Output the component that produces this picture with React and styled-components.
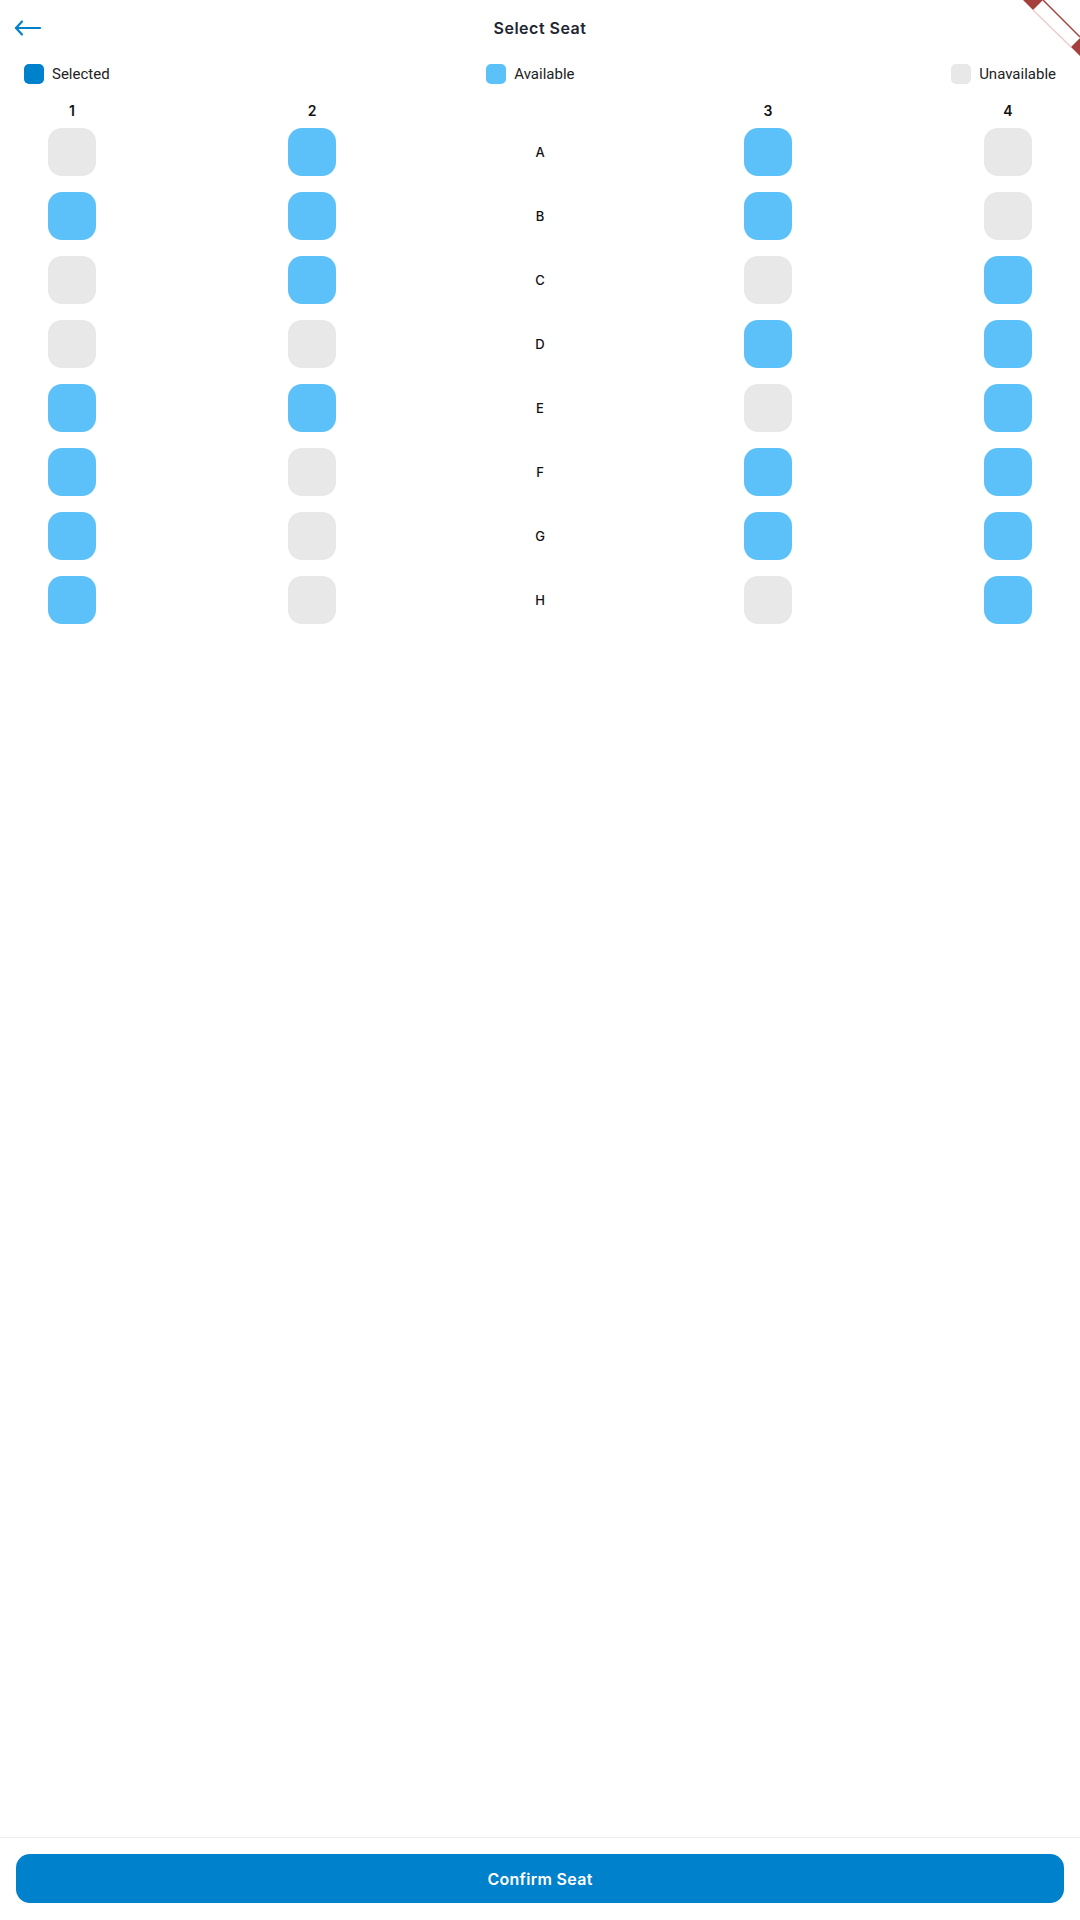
import React from 'react';
import styled, {createGlobalStyle} from 'styled-components';

const GlobalStyle = createGlobalStyle`
    html, body {
        margin: 0;
        padding: 0;
        background: #ffffff;
    }
    body {
        font-family: Inter, "Noto Sans", sans-serif;
        color: #111;
    }
`;

const COLORS = {
    selected: '#0081CC',
    available: '#5CC1F8',
    unavailable: '#E8E8E8',
};

// a = available, u = unavailable
const rows = [
    {label: 'A', seats: ['u', 'a', 'a', 'u']},
    {label: 'B', seats: ['a', 'a', 'a', 'u']},
    {label: 'C', seats: ['u', 'a', 'u', 'a']},
    {label: 'D', seats: ['u', 'u', 'a', 'a']},
    {label: 'E', seats: ['a', 'a', 'u', 'a']},
    {label: 'F', seats: ['a', 'u', 'a', 'a']},
    {label: 'G', seats: ['a', 'u', 'a', 'a']},
    {label: 'H', seats: ['a', 'u', 'u', 'a']},
];

const BackArrow = () => (
    <svg width="28" height="28" viewBox="0 0 28 28" fill="none">
        <path d="M3 14H27" stroke="#0081CC" strokeWidth="2.2" strokeLinecap="round" />
        <path d="M9 7.5L3 14L9 20.5" stroke="#0081CC" strokeWidth="2.2" strokeLinecap="round" strokeLinejoin="round" />
    </svg>
);

const DebugRibbon = () => (
    <Ribbon width="60" height="60" viewBox="0 0 60 60">
        <polygon points="3,0 23,0 60,37 60,56 51,47 13,10" fill="#ffffff" />
        <polygon points="3,0 23,0 13,10" fill="#A43F3B" />
        <polygon points="51,47 60,38 60,56" fill="#A43F3B" />
        <line x1="23" y1="0" x2="60" y2="37" stroke="#A43F3B" strokeWidth="1.4" />
        <line x1="13" y1="10" x2="51" y2="47" stroke="#E9C9CB" strokeWidth="1.2" />
    </Ribbon>
);

function App() {
    const seatKind = s => (s === 'a' ? 'available' : 'unavailable');

    return (
        <Page>
            <GlobalStyle />
            <DebugRibbon />
            <Header>
                <BackButton><BackArrow /></BackButton>
                <Title>Select Seat</Title>
            </Header>

            <Legend>
                <LegendItem>
                    <LegendDot kind="selected" />
                    <LegendText>Selected</LegendText>
                </LegendItem>
                <LegendItem>
                    <LegendDot kind="available" />
                    <LegendText>Available</LegendText>
                </LegendItem>
                <LegendItem>
                    <LegendDot kind="unavailable" />
                    <LegendText>Unavailable</LegendText>
                </LegendItem>
            </Legend>

            <SeatMap>
                <SeatRow header>
                    <ColLabel>1</ColLabel>
                    <ColLabel>2</ColLabel>
                    <Aisle />
                    <ColLabel>3</ColLabel>
                    <ColLabel>4</ColLabel>
                </SeatRow>
                {rows.map(row => (
                    <SeatRow key={row.label}>
                        <Seat kind={seatKind(row.seats[0])} />
                        <Seat kind={seatKind(row.seats[1])} />
                        <Aisle>{row.label}</Aisle>
                        <Seat kind={seatKind(row.seats[2])} />
                        <Seat kind={seatKind(row.seats[3])} />
                    </SeatRow>
                ))}
            </SeatMap>

            <Spacer />

            <Footer>
                <ConfirmButton>Confirm Seat</ConfirmButton>
            </Footer>
        </Page>
    );
}

const Page = styled.div`
    position: relative;
    display: flex;
    flex-direction: column;
    min-height: 1920px;
    background: #fff;
    overflow: hidden;
`;

const Ribbon = styled.svg`
    position: absolute;
    top: 0;
    right: 0;
`;

const Header = styled.div`
    position: relative;
    height: 56px;
    display: flex;
    align-items: center;
    justify-content: center;
`;

const BackButton = styled.div`
    position: absolute;
    left: 13px;
    top: 14px;
    width: 28px;
    height: 28px;
    display: flex;
`;

const Title = styled.div`
    font-size: 16px;
    font-weight: 600;
    letter-spacing: 0.5px;
    color: #1E2530;
`;

const Legend = styled.div`
    display: flex;
    justify-content: space-between;
    align-items: center;
    padding: 8px 24px 0 24px;
    height: 20px;
`;

const LegendItem = styled.div`
    display: flex;
    align-items: center;
    gap: 8px;
`;

const LegendDot = styled.div`
    width: 20px;
    height: 20px;
    border-radius: 5px;
    background: ${props => COLORS[props.kind]};
`;

const LegendText = styled.span`
    font-family: Roboto, "Noto Sans", sans-serif;
    font-size: 15px;
    color: #222;
`;

const SeatMap = styled.div`
    display: flex;
    flex-direction: column;
    gap: 16px;
    padding: 16px 48px 0 48px;
`;

const SeatRow = styled.div`
    display: flex;
    justify-content: space-between;
    align-items: center;
    height: ${props => (props.header ? '20px' : '48px')};
    margin-bottom: ${props => (props.header ? '-8px' : '0')};
`;

const ColLabel = styled.div`
    width: 48px;
    text-align: center;
    font-size: 14px;
    font-weight: 600;
    color: #111;
`;

const Aisle = styled.div`
    width: 24px;
    text-align: center;
    font-size: 13px;
    font-weight: 500;
    color: #111;
`;

const Seat = styled.div`
    width: 48px;
    height: 48px;
    border-radius: 14px;
    background: ${props => COLORS[props.kind]};
`;

const Spacer = styled.div`
    flex: 1;
`;

const Footer = styled.div`
    border-top: 1px solid #EEEEEE;
    padding: 16px 16px 17px 16px;
`;

const ConfirmButton = styled.button`
    width: 100%;
    height: 49px;
    border: none;
    border-radius: 14px;
    background: ${COLORS.selected};
    color: #fff;
    font-family: Inter, "Noto Sans", sans-serif;
    font-size: 16px;
    font-weight: 600;
    letter-spacing: 0.3px;
    cursor: pointer;
`;

export default App;
